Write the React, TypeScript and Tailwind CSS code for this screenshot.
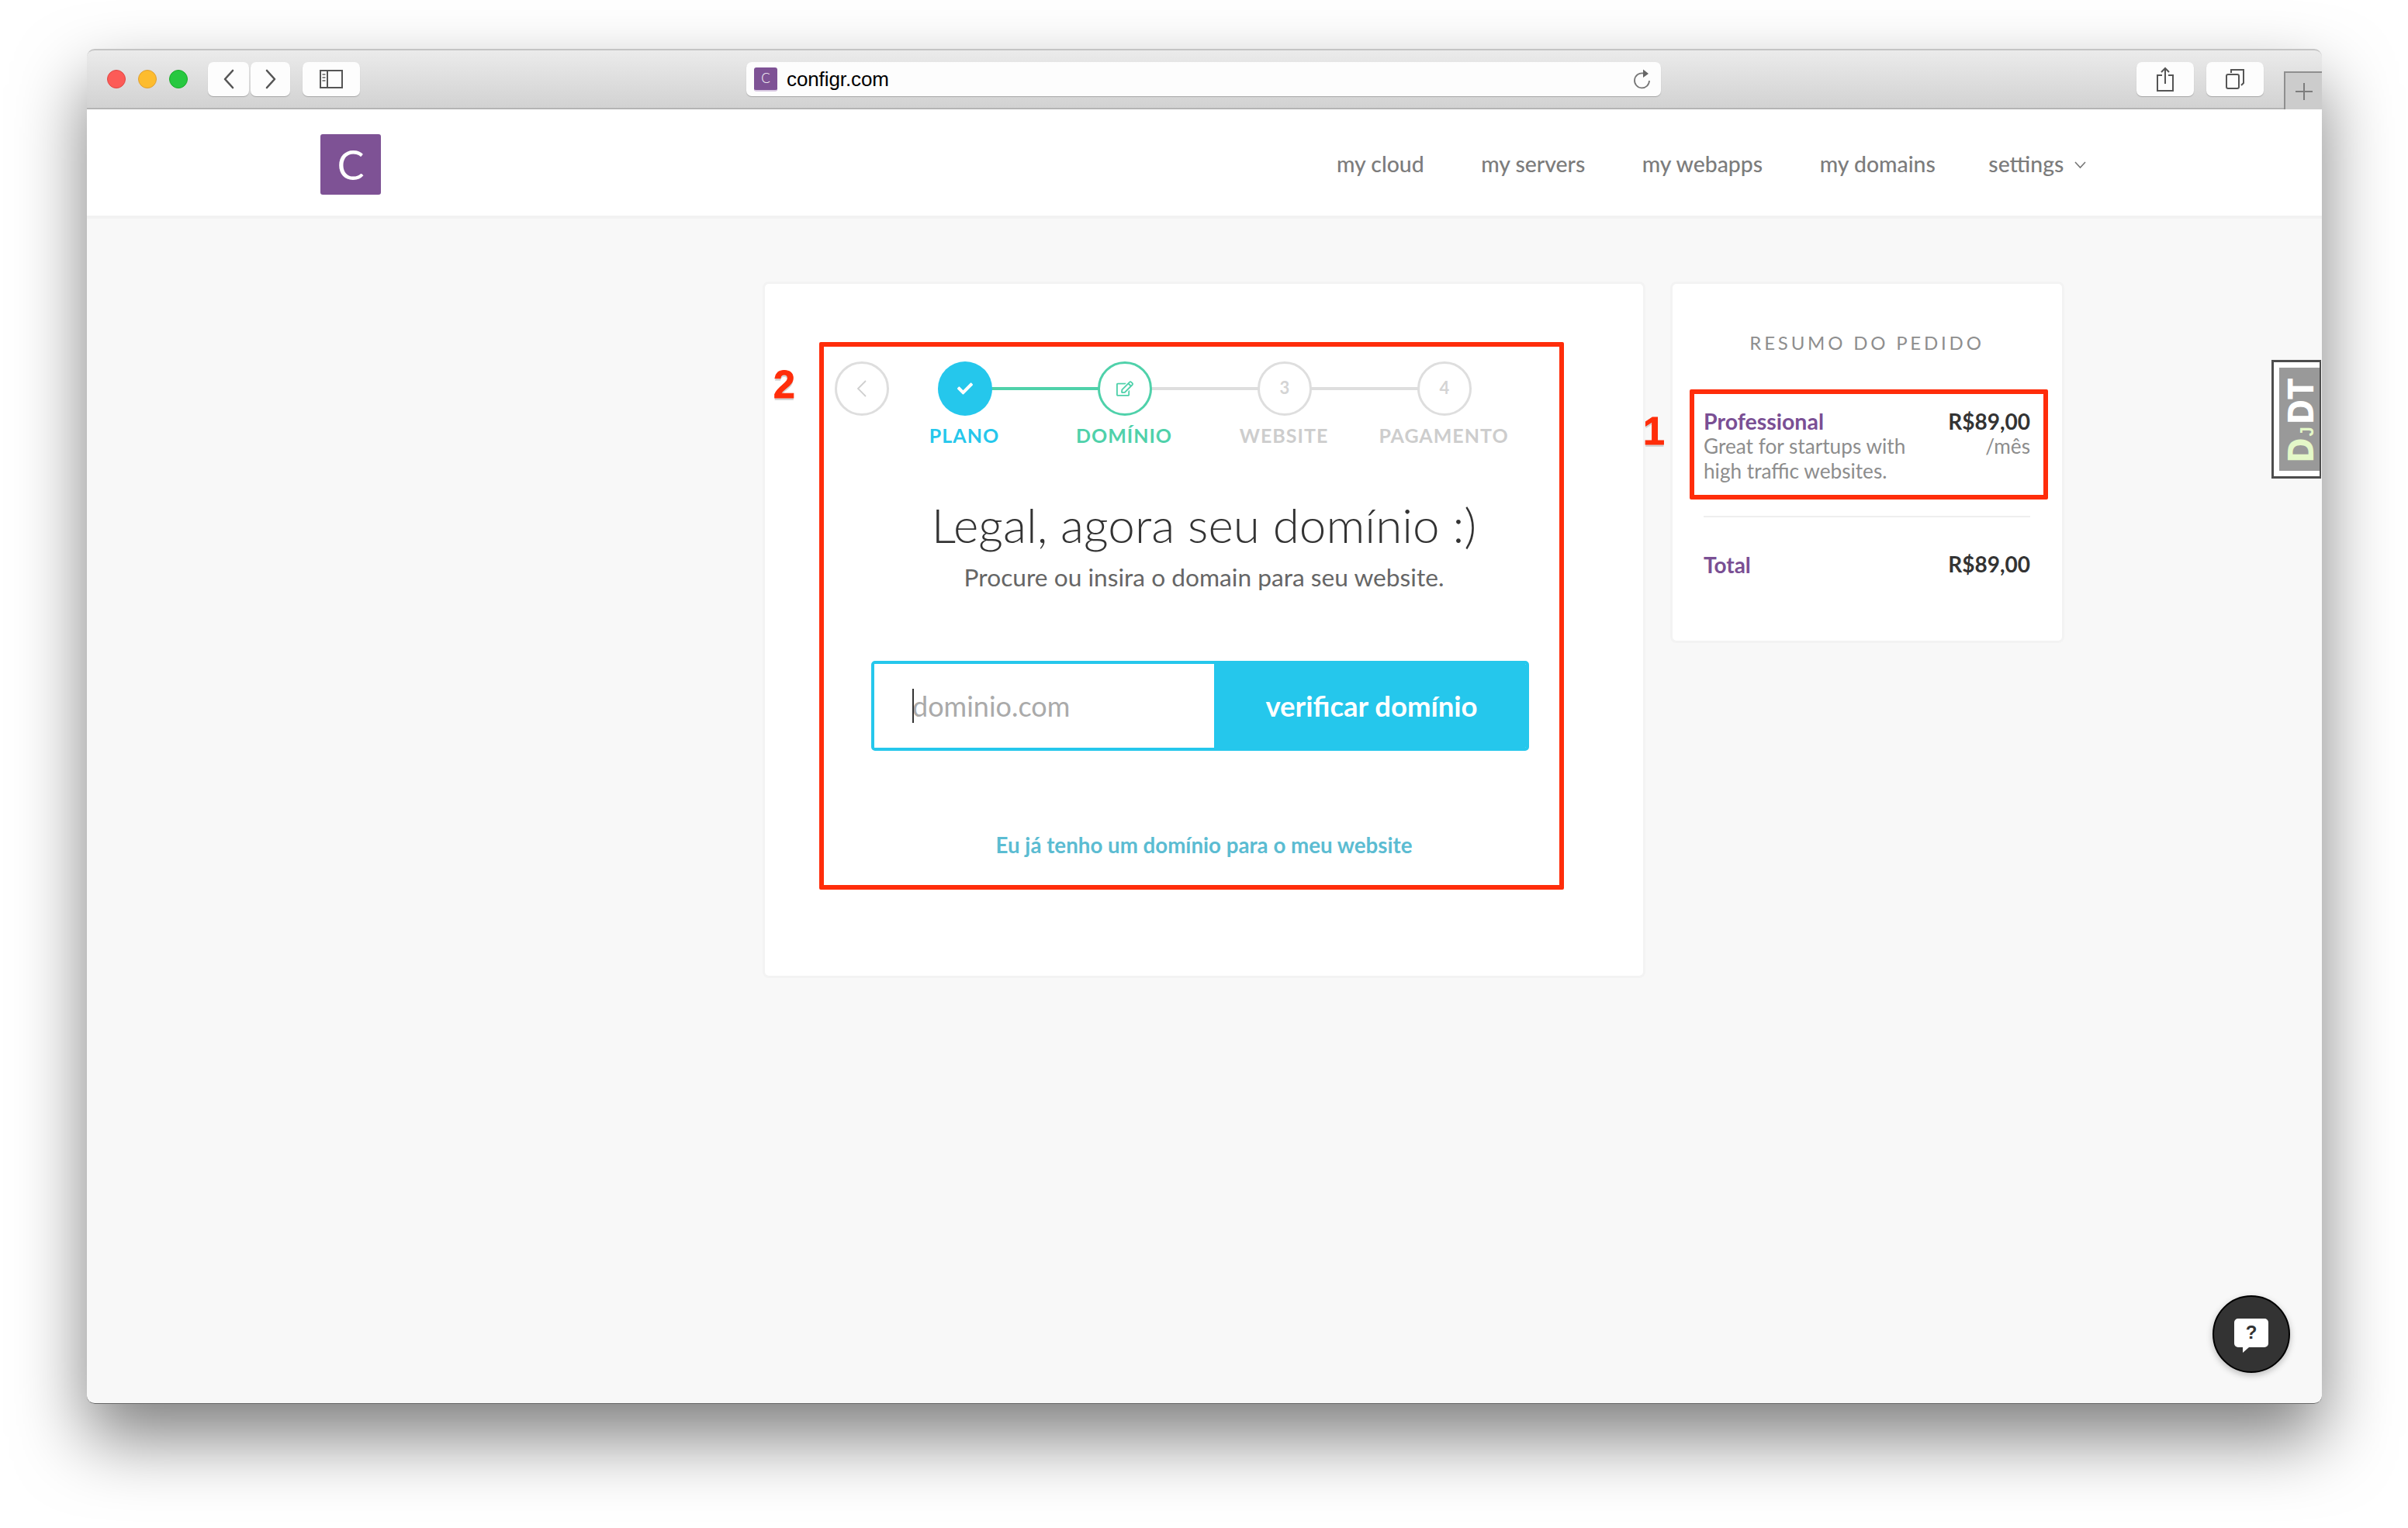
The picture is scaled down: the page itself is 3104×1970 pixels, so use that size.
import { FaCheck, FaRegEdit } from 'react-icons/fa';

const steps = [
  { label: 'PLANO', state: 'done' },
  { label: 'DOMÍNIO', state: 'active' },
  { label: 'WEBSITE', state: 'todo', num: '3' },
  { label: 'PAGAMENTO', state: 'todo', num: '4' },
];

const navItems = ['my cloud', 'my servers', 'my webapps', 'my domains'];

function ToolButton({ className, children }: { className: string; children: React.ReactNode }) {
  return (
    <div className={`h-[44px] bg-[#fdfdfd] rounded-[7px] shadow-[0_1px_1px_rgba(0,0,0,0.22)] flex items-center justify-center ${className}`}>
      {children}
    </div>
  );
}

function Toolbar() {
  return (
    <div className="relative h-[78px] shrink-0 flex items-center pl-[26px] bg-gradient-to-b from-[#ebebeb] to-[#d2d2d2] border-t-2 border-b-2 border-t-[#c4c4c4] border-b-[#b4b4b4] rounded-t-[10px]">
      <div className="flex gap-[16px] mr-[26px]">
        <div className="w-[24px] h-[24px] rounded-full bg-[#fc5b57] border border-[#df4744]" />
        <div className="w-[24px] h-[24px] rounded-full bg-[#fdbc2e] border border-[#de9f34]" />
        <div className="w-[24px] h-[24px] rounded-full bg-[#27c840] border border-[#1aab29]" />
      </div>
      <ToolButton className="w-[53px] mr-[2px]">
        <svg width="16" height="26" viewBox="0 0 16 26" fill="none" stroke="#555" strokeWidth="2.6" strokeLinecap="round" strokeLinejoin="round">
          <path d="M13 2 3 13l10 11" />
        </svg>
      </ToolButton>
      <ToolButton className="w-[51px] mr-[16px]">
        <svg width="16" height="26" viewBox="0 0 16 26" fill="none" stroke="#555" strokeWidth="2.6" strokeLinecap="round" strokeLinejoin="round">
          <path d="m3 2 10 11L3 24" />
        </svg>
      </ToolButton>
      <ToolButton className="w-[74px] mr-[498px]">
        <svg width="30" height="24" viewBox="0 0 30 24" fill="none">
          <rect x="1" y="1" width="28" height="22" stroke="#555" strokeWidth="2" />
          <path d="M10 1v22" stroke="#555" strokeWidth="2" />
          <path d="M3.5 6h4M3.5 10h4M3.5 14h4" stroke="#888" strokeWidth="2" />
        </svg>
      </ToolButton>
      <ToolButton className="w-[1179px] mr-[613px] justify-start pl-[10px] pr-[12px]">
        <div className="w-[30px] h-[31px] bg-[#7e5295] rounded-[3px] border-b-2 border-[#d9c9e2] flex items-center justify-center text-white text-[17px] font-['Lato',sans-serif] font-light">
          C
        </div>
        <span className="ml-[12px] text-[26px] tracking-[-0.1px] text-black font-['Liberation_Sans',sans-serif]">configr.com</span>
        <svg className="ml-auto" width="24" height="28" viewBox="0 0 24 28" fill="none">
          <path d="M13 6.5A9.5 9.5 0 1 0 21 16" stroke="#777" strokeWidth="1.8" />
          <path d="M13 1.5 20 7l-7 5z" fill="#666" />
        </svg>
      </ToolButton>
      <ToolButton className="w-[74px] mr-[16px]">
        <svg width="24" height="32" viewBox="0 0 24 32" fill="none" stroke="#555" strokeWidth="2">
          <path d="M8 11H2v20h20V11h-6" />
          <path d="M12 22V2M7 7l5-5 5 5" />
        </svg>
      </ToolButton>
      <ToolButton className="w-[74px]">
        <svg width="26" height="26" viewBox="0 0 26 26" fill="none" stroke="#555" strokeWidth="2">
          <path d="M8 5V1h16v17l-3 3" />
          <rect x="2" y="7" width="16" height="18" rx="2" />
        </svg>
      </ToolButton>
      {/* new tab box */}
      <div className="absolute right-0 bottom-[-2px] w-[49px] h-[49px] border-l-2 border-t-2 border-[#8f8f8f] bg-[#cccccc] flex items-center justify-center">
        <svg width="24" height="24" viewBox="0 0 24 24" stroke="#7d7d7d" strokeWidth="2">
          <path d="M12 1v22M1 12h22" />
        </svg>
      </div>
    </div>
  );
}

function TopNav() {
  return (
    <div className="h-[141px] shrink-0 bg-white border-b-4 border-[#f2f2f2] flex items-center pl-[301px] pt-[4px] font-['Lato',sans-serif]">
      <div className="w-[78px] h-[78px] bg-[#7e5295] rounded-[3px] flex items-center justify-center text-white text-[52px] font-normal leading-none">
        C
      </div>
      <div className="ml-[1232px] flex items-center gap-[73.5px] text-[28.4px] font-medium text-[#7c7c7c]">
        {navItems.map((n) => (
          <span key={n}>{n}</span>
        ))}
        <span className="flex items-center -ml-[5px]">
          settings
          <svg className="ml-[14px] mt-[3px]" width="15" height="10" viewBox="0 0 15 10" fill="none" stroke="#777" strokeWidth="1.6">
            <path d="m1 1 6.5 7L14 1" />
          </svg>
        </span>
      </div>
    </div>
  );
}

function Stepper() {
  return (
    <div className="flex">
      <div className="w-[70px] h-[70px] rounded-full border-[3px] border-[#dedede] flex items-center justify-center -mr-[5px] ml-[90px]">
        <svg width="14" height="24" viewBox="0 0 14 24" fill="none" stroke="#cfcfcf" strokeWidth="1.8">
          <path d="M12 2 2 12l10 10" />
        </svg>
      </div>
      {steps.map((s, i) => (
        <div key={s.label} className="relative w-[206px] flex flex-col items-center">
          {i < 3 && (
            <div className={`absolute left-1/2 top-[33px] w-full h-[4px] ${i === 0 ? 'bg-[#4fd1aa]' : 'bg-[#dedede]'}`} />
          )}
          {s.state === 'done' && (
            <div className="relative w-[70px] h-[70px] rounded-full bg-[#25c7ec] flex items-center justify-center text-white text-[20px]">
              <FaCheck />
            </div>
          )}
          {s.state === 'active' && (
            <div className="relative w-[70px] h-[70px] rounded-full bg-white border-[3px] border-[#4fd1aa] flex items-center justify-center text-[#4fd1aa] text-[22px]">
              <FaRegEdit />
            </div>
          )}
          {s.state === 'todo' && (
            <div className="relative w-[70px] h-[70px] rounded-full bg-white border-[3px] border-[#dedede] flex items-center justify-center text-[#d4d4d4] text-[22px] font-bold pb-[4px]">
              {s.num}
            </div>
          )}
          <div className={`mt-[5px] -ml-[2px] text-[25px] leading-[40px] font-bold tracking-[1px] whitespace-nowrap ${s.state === 'done' ? 'text-[#25c7ec]' : s.state === 'active' ? 'text-[#4fd1aa]' : 'text-[#cdcdcd]'}`}>
            {s.label}
          </div>
        </div>
      ))}
    </div>
  );
}

function MainCard() {
  return (
    <div className="relative w-[1138px] h-[898px] bg-white border-[3px] border-[#f3f3f3] rounded-[8px] pt-[100px]">
      <Stepper />
      <h1 className="mt-[57px] text-center text-[62px] leading-[76px] font-light text-[#333]">Legal, agora seu domínio :)</h1>
      <p className="mt-[10px] text-center text-[31.7px] leading-[40px] text-[#666]">Procure ou insira o domain para seu website.</p>
      <div className="mt-[88px] ml-[137px] w-[848px] h-[116px] flex rounded-[5px] overflow-hidden border-4 border-[#25c7ec]">
        <div className="w-[438px] bg-white flex items-center pl-[49px] text-[36px] text-[#aaa] relative">
          <div className="absolute left-[49px] top-[32px] w-[2px] h-[44px] bg-[#333]" />
          dominio.com
        </div>
        <div className="flex-1 bg-[#25c7ec] flex items-center justify-center pl-[4px] text-white text-[36.5px] font-bold">
          verificar domínio
        </div>
      </div>
      <div className="mt-[102px] text-center text-[27.7px] leading-[40px] font-bold text-[#5bbcd2]">
        Eu já tenho um domínio para o meu website
      </div>
      {/* annotation */}
      <div className="absolute left-[70px] top-[75px] w-[960px] h-[706px] border-[6px] border-[#ff2d0a] rounded-[2px]" />
      <div className="absolute left-[11px] top-[105px] text-[50px] leading-none font-bold text-[#ff2d0a] font-['Liberation_Sans',sans-serif] [-webkit-text-stroke:1px_#ff2d0a] [text-shadow:0_3px_0_#d4d4d4]">
        2
      </div>
    </div>
  );
}

function SummaryCard() {
  return (
    <div className="relative w-[508px] h-[466px] bg-white border-[3px] border-[#f3f3f3] rounded-[8px] pl-[40px] pr-[41px] pt-[58px]">
      <div className="text-center text-[24px] leading-[36px] tracking-[3.8px] text-[#8e8e8e] whitespace-nowrap">RESUMO DO PEDIDO</div>
      <div className="mt-[67px] flex justify-between">
        <div>
          <div className="text-[28.5px] leading-[32px] font-bold text-[#7a4f94]">Professional</div>
          <div className="text-[26.2px] leading-[32px] text-[#8d8d8d]">
            Great for startups with
            <br />
            high traffic websites.
          </div>
        </div>
        <div className="text-right">
          <div className="text-[28px] leading-[32px] font-bold text-[#333]">R$89,00</div>
          <div className="text-[26.2px] leading-[32px] text-[#8d8d8d]">/mês</div>
        </div>
      </div>
      <div className="mt-[42px] h-[2px] bg-[#eeeeee]" />
      <div className="mt-[44px] flex justify-between items-start">
        <div className="mt-[1px] text-[28px] leading-[32px] font-bold text-[#7a4f94]">Total</div>
        <div className="text-[28px] leading-[32px] font-bold text-[#333]">R$89,00</div>
      </div>
      {/* annotation */}
      <div className="absolute left-[22px] top-[136px] w-[462px] h-[142px] border-[6px] border-[#ff2d0a] rounded-[2px]" />
      <div className="absolute -left-[38px] top-[165px] text-[50px] leading-none font-bold text-[#ff2d0a] font-['Liberation_Sans',sans-serif] [-webkit-text-stroke:1px_#ff2d0a] [text-shadow:0_3px_0_#d4d4d4]">
        1
      </div>
    </div>
  );
}

export default function App() {
  return (
    <div className="w-[3104px] h-[1970px] bg-white pt-[63px] pl-[112px] overflow-hidden">
      <div className="relative w-[2881px] h-[1747px] flex flex-col rounded-[10px] shadow-[0_44px_90px_rgba(0,0,0,0.5)] bg-[#f8f8f8]">
        <Toolbar />
        <div className="flex-1 flex flex-col font-['Lato',sans-serif] rounded-b-[10px] overflow-hidden border-b border-[#666]">
          <TopNav />
          <div className="flex items-start gap-[32px] pl-[871px] pt-[81px]">
            <MainCard />
            <SummaryCard />
          </div>
        </div>

        {/* django debug toolbar handle */}
        <div className="absolute right-[1px] top-[401px] w-[64px] h-[153px] bg-white border-[3px] border-r-[2px] border-[#4d4d4d] pl-[7px] py-[7px]">
          <div className="h-full bg-[#999] flex items-center justify-center pl-[6px] pt-[4px]">
            <div className="[transform:rotate(-90deg)_scaleY(1.12)] whitespace-nowrap text-[39px] leading-none font-bold text-white font-['DejaVu_Sans',sans-serif]">
              <span className="text-[#e4f8c8]">D<span className="text-[22px] ml-[2px] mr-[3px] font-['Liberation_Sans',sans-serif]">J</span></span>DT
            </div>
          </div>
        </div>

        {/* help button */}
        <div className="absolute left-[2740px] top-[1607px] w-[100px] h-[100px] rounded-full bg-[#333] border-2 border-black shadow-[0_3px_8px_rgba(0,0,0,0.25)] flex items-center justify-center">
          <div className="relative w-[44px] h-[44px] mt-[3px]">
            <svg width="44" height="44" viewBox="0 0 44 44" fill="#fff">
              <path d="M5 0h34a5 5 0 0 1 5 5v27a5 5 0 0 1-5 5H19l-8 7v-7H5a5 5 0 0 1-5-5V5a5 5 0 0 1 5-5z" />
            </svg>
            <span className="absolute left-0 top-[4px] w-full text-center text-[24px] leading-[28px] font-bold text-[#333] font-['Liberation_Sans',sans-serif]">?</span>
          </div>
        </div>
      </div>
    </div>
  );
}
